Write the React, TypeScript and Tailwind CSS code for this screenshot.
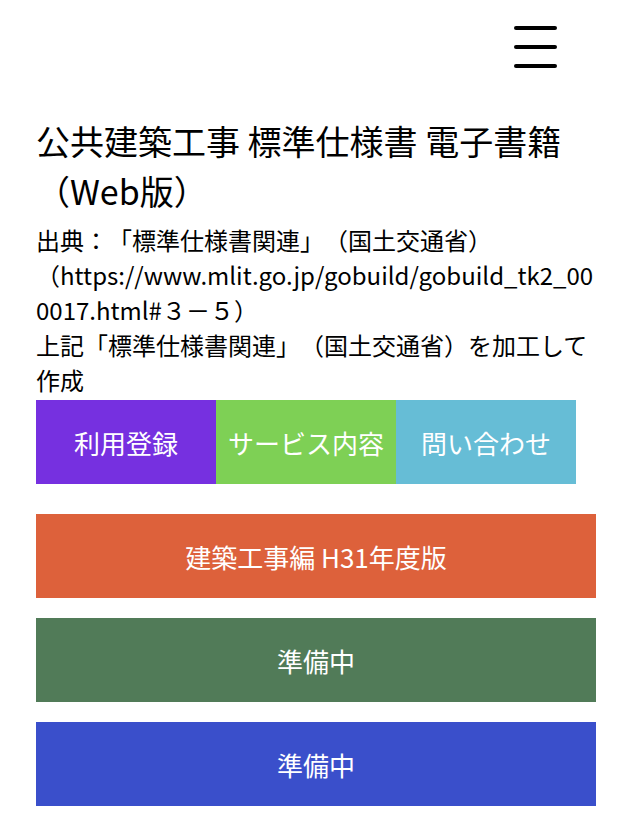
import React from "react";

const font = { fontFamily: '"Noto Sans CJK JP", "Noto Sans", sans-serif' };

export default function App() {
  return (
    <div className="min-h-[824px] w-full bg-white text-black [text-spacing-trim:space-all]" style={font}>
      <header className="flex h-[92px] justify-end pr-[75px] pt-[26px]">
        <button className="flex h-[42px] w-[43px] flex-col justify-between py-0" aria-label="menu">
          <span className="block h-[4px] w-full rounded-full bg-black" />
          <span className="block h-[4px] w-full rounded-full bg-black" />
          <span className="block h-[4px] w-full rounded-full bg-black" />
        </button>
      </header>
      <main className="px-[36px]">
        <h1 className="pt-[24px] text-[34px] font-normal leading-[50px]">
          公共建築工事 標準仕様書 電子書籍（Web版）
        </h1>
        <p className="mt-[6px] break-words text-[24px] leading-[35px]">
          出典：「標準仕様書関連」（国土交通省）
          <br />
          （https://www.mlit.go.jp/gobuild/gobuild_tk2_000017.html#３－５）
          <br />
          上記「標準仕様書関連」（国土交通省）を加工して作成
        </p>
        <nav className="mt-[3px] flex">
          <a className="flex h-[84px] w-[180px] items-center justify-center bg-[#7630e0] text-[26px] text-white">利用登録</a>
          <a className="flex h-[84px] w-[180px] items-center justify-center bg-[#7ed055] text-[26px] text-white">サービス内容</a>
          <a className="flex h-[84px] w-[180px] items-center justify-center bg-[#66bdd6] text-[26px] text-white">問い合わせ</a>
        </nav>
        <div className="mt-[30px] flex flex-col gap-[20px] pb-[20px]">
          <a className="flex h-[84px] items-center justify-center bg-[#dd613b] text-[26px] text-white">建築工事編 H31年度版</a>
          <a className="flex h-[84px] items-center justify-center bg-[#517b58] text-[26px] text-white">準備中</a>
          <a className="flex h-[84px] items-center justify-center bg-[#3a4fcb] text-[26px] text-white">準備中</a>
        </div>
      </main>
    </div>
  );
}
